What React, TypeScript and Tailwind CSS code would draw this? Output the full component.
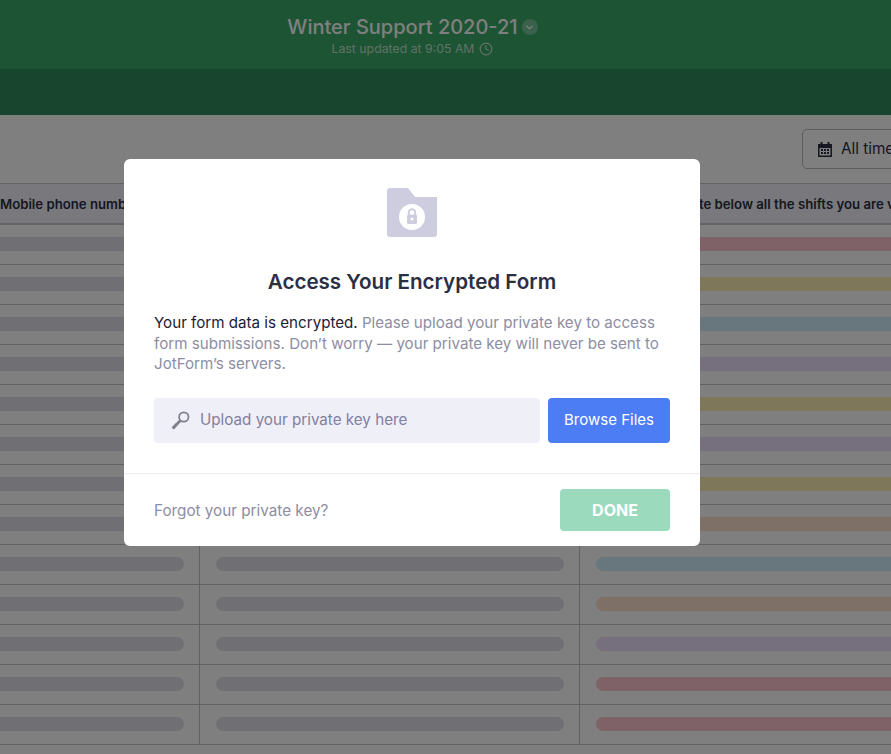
import { ChevronDown, Clock } from "lucide-react";

const rowColors = [
  "bg-[#ffc4d0]",
  "bg-[#fdeeb4]",
  "bg-[#d0eefb]",
  "bg-[#ecdffb]",
  "bg-[#fdeeb4]",
  "bg-[#ecdffb]",
  "bg-[#fdeeb4]",
  "bg-[#fde0cf]",
  "bg-[#d0eefb]",
  "bg-[#fde0cf]",
  "bg-[#ecdffb]",
  "bg-[#ffc4d0]",
  "bg-[#ffc4d0]",
];

function FolderLock() {
  return (
    <svg width="50" height="49" viewBox="0 0 50 49">
      <path d="M3 0h18l7 9h22v37a3 3 0 0 1-3 3H3a3 3 0 0 1-3-3V3a3 3 0 0 1 3-3z" fill="#cdcddf" />
      <circle cx="25" cy="29" r="13" fill="#fff" />
      <path d="M21.8 27v-2.6a3.2 3.2 0 0 1 6.4 0V27" fill="none" stroke="#cdcddf" strokeWidth="2" />
      <rect x="20" y="26.5" width="10" height="9.5" rx="1.5" fill="#cdcddf" />
      <circle cx="25" cy="31" r="1.6" fill="#fff" />
    </svg>
  );
}

function KeyIcon() {
  return (
    <svg width="20" height="20" viewBox="0 0 20 20" fill="none">
      <circle cx="13.8" cy="7" r="4.7" stroke="#80808f" strokeWidth="1.8" />
      <path d="M10.4 10.6 2.6 18.4" stroke="#80808f" strokeWidth="2.8" />
      <path d="M3 16l2 2.4M5.2 13.8l1.8 2" stroke="#80808f" strokeWidth="1.8" />
    </svg>
  );
}

function CalendarIcon() {
  return (
    <svg width="14" height="15" viewBox="0 0 14 15" fill="#2b2f42">
      <rect x="2.5" y="0" width="2" height="3" />
      <rect x="9.5" y="0" width="2" height="3" />
      <path d="M0 2h14v13H0zM1.5 6v7.5h11V6z" />
      <path d="M3 7h2v2H3zM6 7h2v2H6zM9 7h2v2H9zM3 10h2v2H3zM6 10h2v2H6zM9 10h2v2H9z" />
    </svg>
  );
}

export default function App() {
  return (
    <div className="relative h-[754px] w-[891px] overflow-hidden bg-white font-['Inter',sans-serif]">
      <header className="h-[115px] bg-[#308a5a]">
        <div className="flex h-[69px] flex-col items-center bg-[#3aa868] pt-[14px] pr-[66px]">
          <div className="flex items-center gap-[4px]">
            <h1 className="text-[20px] leading-[26px] font-medium text-white">Winter Support 2020-21</h1>
            <span className="flex h-[16px] w-[16px] items-center justify-center rounded-full bg-white/30">
              <ChevronDown size={11} strokeWidth={3} className="text-white" />
            </span>
          </div>
          <div className="mt-[1px] flex items-center gap-[5px] text-[12.3px] leading-[16px] text-white/70">
            Last updated at 9:05 AM
            <Clock size={14} strokeWidth={2} />
          </div>
        </div>
      </header>

      <div className="flex h-[68px] justify-end pt-[14px]">
        <button className="flex h-[40px] w-[120px] shrink-0 -mr-[31px] items-center gap-[9px] rounded-[5px] border border-[#b8b8c4] pl-[15px] text-[15.3px] text-[#2b2f42]">
          <CalendarIcon />
          <span className="pt-[1px]">All time</span>
        </button>
      </div>

      <div className="flex h-[42px] items-center whitespace-nowrap border-t border-b-2 border-[#c8c8d0] bg-[#f3f3fb] pt-[2px] text-[13.2px] font-semibold text-[#2b2f42]">
        <div className="w-[580px] shrink-0">Mobile phone number</div>
        <div className="pl-[57px]">Please note below all the shifts you are volunteering for</div>
      </div>

      {rowColors.map((color, i) => (
        <div key={i} className="flex h-[40px] border-b border-[#c4c4c4]">
          <div className="flex w-[200px] shrink-0 items-center border-r border-[#c4c4c4] pr-[15px] pb-[1px]">
            <div className="h-[14px] w-full rounded-r-full bg-[#dfdfe8]" />
          </div>
          <div className="flex w-[380px] shrink-0 items-center border-r border-[#c4c4c4] pr-[15px] pb-[1px] pl-[16px]">
            <div className="h-[14px] w-full rounded-full bg-[#dfdfe8]" />
          </div>
          <div className="flex flex-1 items-center pb-[1px] pl-[16px]">
            <div className={`h-[14px] w-full rounded-l-full ${color}`} />
          </div>
        </div>
      ))}

      <div className="absolute inset-0 bg-black/50" />

      <div className="absolute top-[159px] left-[124px] w-[576px] rounded-[6px] bg-white">
        <div className="flex flex-col items-center pt-[29px]">
          <FolderLock />
          <h2 className="mt-[31px] text-[20.6px] leading-[28px] font-semibold text-[#2b2f42]">Access Your Encrypted Form</h2>
        </div>
        <p className="mt-[17px] px-[30px] text-[15.15px] leading-[20.5px] text-[#8d8da3]">
          <span className="text-[#1d2035]">Your form data is encrypted.</span> Please upload your private key to access form submissions. Don’t worry — your private key will never be sent to JotForm’s servers.
        </p>
        <div className="mt-[23px] flex gap-[8px] px-[30px]">
          <div className="flex h-[45px] flex-1 items-center gap-[10px] rounded-[4px] bg-[#efeff8] pl-[16px] text-[15.2px] text-[#8080a0]">
            <KeyIcon />
            <span className="pt-[1px]">Upload your private key here</span>
          </div>
          <button className="h-[45px] w-[122px] rounded-[4px] bg-[#4c7df5] pt-[1px] text-[15px] text-white">Browse Files</button>
        </div>
        <div className="mt-[30px] flex h-[73px] items-center justify-between border-t border-[#ececf0] px-[30px]">
          <span className="pt-[4px] text-[15.25px] text-[#8d8da3]">Forgot your private key?</span>
          <button className="h-[42px] w-[110px] rounded-[4px] bg-[#9bdabd] text-[16px] font-bold text-white">DONE</button>
        </div>
      </div>
    </div>
  );
}
